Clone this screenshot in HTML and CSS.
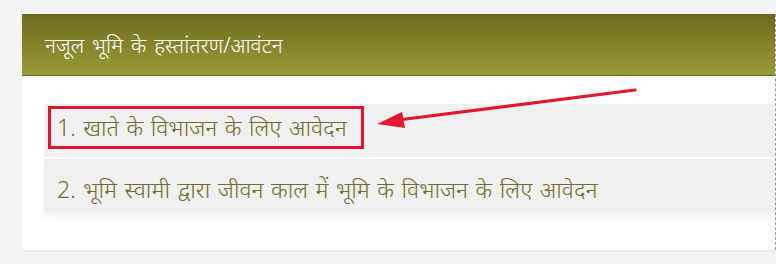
FILE: index.html
```html
<!DOCTYPE html>
<html lang="hi">
<head>
<meta charset="utf-8">
<title>नजूल भूमि के हस्तांतरण/आवंटन</title>
<link rel="stylesheet" href="styles.css">
</head>
<body>
<div class="page">
  <section class="card">
    <header class="card-head">नजूल भूमि के हस्तांतरण/आवंटन</header>
    <div class="card-body">
      <div class="item item-first">
        <span class="highlight">1. खाते के विभाजन के लिए आवेदन</span>
      </div>
      <div class="item item-second">
        <span class="item-text">2. भूमि स्वामी द्वारा जीवन काल में भूमि के विभाजन के लिए आवेदन</span>
      </div>
    </div>
    <svg class="arrow" width="280" height="50" viewBox="0 0 280 50">
      <line x1="277" y1="8" x2="40" y2="38" stroke="#e3172f" stroke-width="3.2" stroke-linecap="round"/>
      <polygon points="19,42 44,30 47,46" fill="#e3172f"/>
    </svg>
  </section>
</div>
</body>
</html>
```

FILE: styles.css
```css
html, body {
  margin: 0;
  padding: 0;
}
body {
  background: #f4f4f5;
  font-family: "Noto Sans", "Open Sans", "Liberation Sans", sans-serif;
  width: 776px;
  height: 264px;
  overflow: hidden;
}
.page {
  padding: 14px 0 0 22px;
}
.card {
  position: relative;
  width: 753px;
  height: 236px;
  background: #ffffff;
  border-right: 1px dashed #9a9a9a;
  border-radius: 2px 0 0 3px;
  box-shadow: 0 1px 3px rgba(0,0,0,0.08);
}
.card-head {
  height: 62px;
  box-sizing: border-box;
  padding: 17px 0 0 23px;
  background: linear-gradient(to bottom, #6d6b22 0%, #838129 45%, #979b37 100%);
  border-bottom: 1px solid #6a6820;
  border-top: 1px solid #66651f;
  color: #ffffff;
  font-size: 21px;
  font-weight: 300;
  word-spacing: 2.5px;
  line-height: 26px;
}
.card-body {
  padding: 28px 0 0 22px;
  display: flex;
  flex-direction: column;
  gap: 2px;
}
.item {
  background: #f0f0f0;
  height: 53px;
  box-sizing: border-box;
  color: #736d2e;
  font-size: 23px;
  font-weight: 300;
  word-spacing: 1.5px;
}
.item-first {
  padding: 2px 0 0 4px;
}
.highlight {
  display: inline-block;
  border: 3px solid #e0162e;
  height: 43px;
  box-sizing: border-box;
  padding: 4px 14px 0 6px;
  line-height: 28px;
}
.item-second {
  padding: 16px 0 0 13px;
  line-height: 28px;
  box-shadow: 0 5px 6px rgba(0,0,0,0.05);
}
.arrow {
  position: absolute;
  left: 336px;
  top: 68px;
}
```
